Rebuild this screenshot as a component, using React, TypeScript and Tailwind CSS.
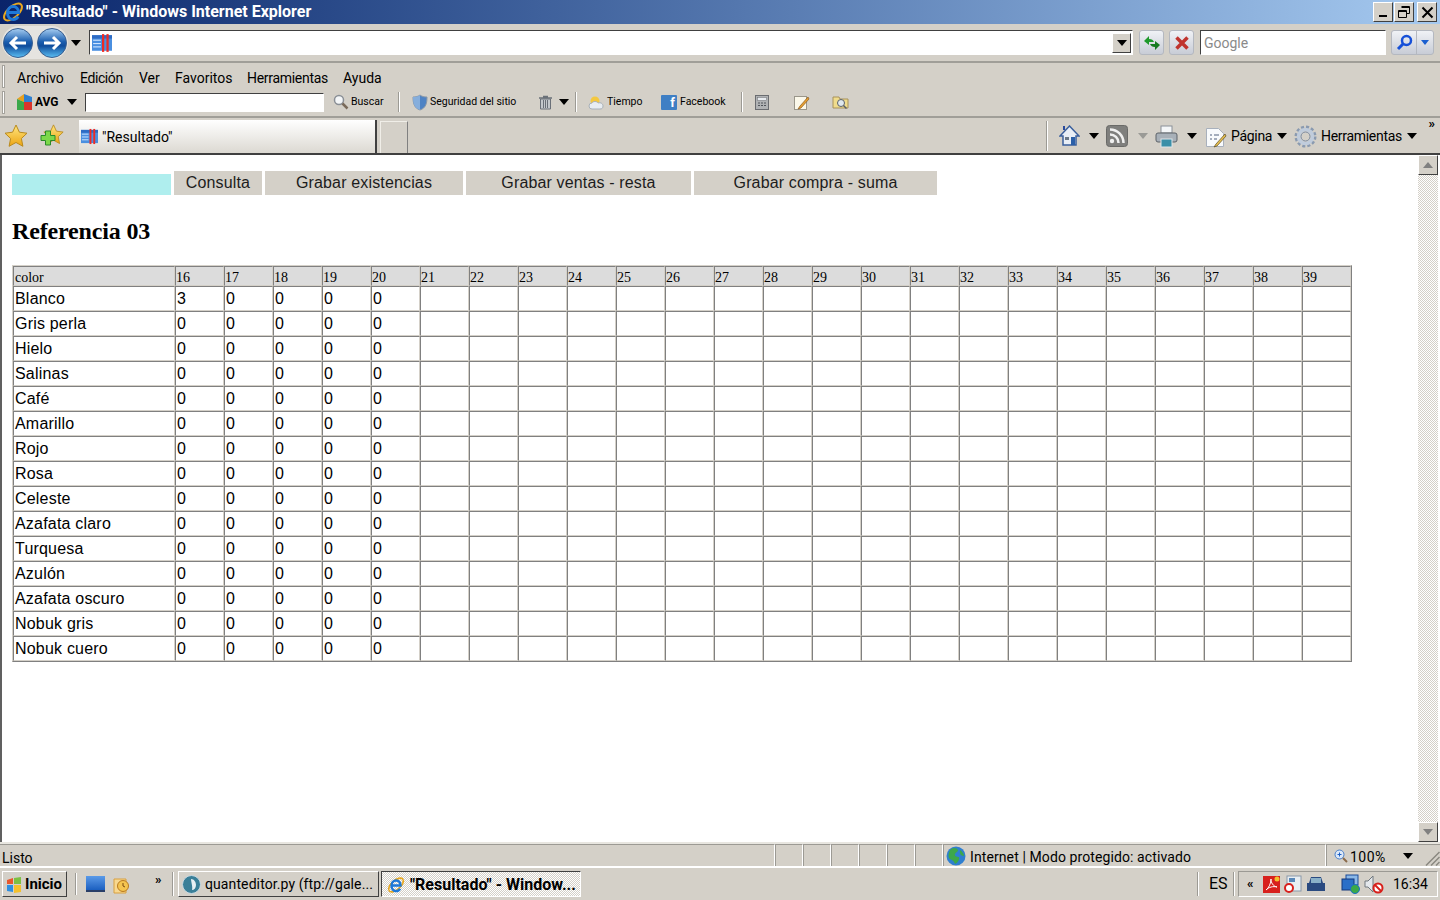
import React from "react";

const sizes = [16, 17, 18, 19, 20, 21, 22, 23, 24, 25, 26, 27, 28, 29, 30, 31, 32, 33, 34, 35, 36, 37, 38, 39];
const colors = [
  "Blanco",
  "Gris perla",
  "Hielo",
  "Salinas",
  "Café",
  "Amarillo",
  "Rojo",
  "Rosa",
  "Celeste",
  "Azafata claro",
  "Turquesa",
  "Azulón",
  "Azafata oscuro",
  "Nobuk gris",
  "Nobuk cuero",
];

const cellBorder = "border border-t-[#808080] border-l-[#808080] border-r-[#d4d0c8] border-b-[#d4d0c8]";

const Arrow = ({ gray = false }: { gray?: boolean }) => (
  <svg width="10" height="6" viewBox="0 0 10 6" className="shrink-0">
    <path d="M0 0h10L5 6z" fill={gray ? "#9a9a96" : "#000"} />
  </svg>
);

const Sep = ({ h = "h-[20px]" }: { h?: string }) => (
  <div className={`w-[2px] shrink-0 border-l border-l-[#9c9a94] border-r border-r-white ${h}`} />
);

const PageIcon = ({ size = 18 }: { size?: number }) => (
  <svg width={size} height={size} viewBox="0 0 18 18" className="shrink-0">
    <rect x="0" y="2" width="18" height="14" fill="#4a8fe0" />
    <rect x="1" y="6" width="7" height="1" fill="#cfe4ff" />
    <rect x="1" y="9" width="7" height="1" fill="#cfe4ff" />
    <rect x="1" y="12" width="7" height="1" fill="#cfe4ff" />
    <rect x="0" y="2" width="18" height="3" fill="#2d6bc4" />
    <rect x="9" y="1" width="2" height="16" fill="#ee2b24" />
    <rect x="13" y="1" width="2" height="16" fill="#ee2b24" />
  </svg>
);

const IELogo = ({ size = 22 }: { size?: number }) => (
  <svg width={size} height={size} viewBox="0 0 22 22" className="shrink-0">
    <ellipse cx="11" cy="11" rx="11" ry="5.5" transform="rotate(-42 11 11)" fill="none" stroke="#e8a820" strokeWidth="2" />
    <path d="M6 11.500h10.500c0-3.500-2.300-6-5.300-6S5.500 8 5.500 12s2.500 6.500 5.700 6.500c2.200 0 3.800-1 4.800-3" fill="none" stroke="#1e78d8" strokeWidth="3" />
  </svg>
);

const NavCircle = ({ dir, id }: { dir: "l" | "r"; id: string }) => (
  <svg width="30" height="30" viewBox="0 0 30 30" className="shrink-0">
    <defs>
      <linearGradient id={id} x1="0" y1="0" x2="0" y2="1">
        <stop offset="0" stopColor="#a8cff2" />
        <stop offset="0.45" stopColor="#1c5fb0" />
        <stop offset="0.6" stopColor="#0f4c9c" />
        <stop offset="1" stopColor="#5cc0f4" />
      </linearGradient>
    </defs>
    <circle cx="15" cy="15" r="14.500" fill={`url(#${id})`} stroke="#3a5f90" />
    <path
      d={dir === "l" ? "M23 15H9M14 9l-6 6 6 6" : "M7 15h14M16 9l6 6-6 6"}
      fill="none"
      stroke="#fff"
      strokeWidth="3"
    />
  </svg>
);

const Star = ({ size = 24 }: { size?: number }) => (
  <svg width={size} height={size} viewBox="0 0 24 24" className="shrink-0">
    <defs>
      <linearGradient id={`star${size}`} x1="0" y1="0" x2="0" y2="1">
        <stop offset="0" stopColor="#ffe680" />
        <stop offset="1" stopColor="#eda512" />
      </linearGradient>
    </defs>
    <path d="M12 1l3.400 7.200 7.600 1-5.600 5.300 1.500 7.800L12 18.500l-6.900 3.800 1.500-7.800L1 9.200l7.600-1z" fill={`url(#star${size})`} stroke="#b98a1e" />
  </svg>
);

const Gear = () => (
  <svg width="23" height="23" viewBox="0 0 23 23" className="shrink-0">
    <circle cx="11.500" cy="11.500" r="9.500" fill="none" stroke="#8a9ab0" strokeWidth="3" strokeDasharray="3 2" />
    <circle cx="11.500" cy="11.500" r="7" fill="none" stroke="#c0ccdc" strokeWidth="3.500" />
    <circle cx="11.500" cy="11.500" r="4.500" fill="none" stroke="#7d8ca2" />
  </svg>
);

const Globe = () => (
  <svg width="20" height="20" viewBox="0 0 20 20" className="shrink-0">
    <circle cx="10" cy="10" r="9.500" fill="#2f7fd0" />
    <path d="M5 3c3-2 6-1 7 1 0 2-2 2-3 4s2 3 4 3c1 3-2 6-4 7-1-3-3-4-5-5S2 6 5 3z" fill="#3da84a" />
    <path d="M14 4c2 1 4 4 4 6-2 0-4-1-4-3z" fill="#3da84a" />
  </svg>
);

const Shield = () => (
  <svg width="16" height="17" viewBox="0 0 16 17" className="shrink-0">
    <path d="M8 1c2 1.500 4 2 7 2 0 6-1 11-7 13C2 14 1 9 1 3c3 0 5-.5 7-2z" fill="#4f83c4" stroke="#8a98a8" />
    <path d="M8 1v15C2 14 1 9 1 3c3 0 5-.5 7-2z" fill="#86aedc" />
  </svg>
);

const ToolButton = ({ children }: { children: React.ReactNode }) => (
  <div className="flex items-center justify-center w-[25px] h-[25px] rounded-[3px] border border-[#b4b8c0] bg-gradient-to-b from-[#f0f2f6] to-[#c8ccd6]">
    {children}
  </div>
);

const Grip = () => <div className="w-[3px] h-[23px] shrink-0 border border-[#a4a29c] bg-white" />;

const Inset = "border border-t-[#404040] border-l-[#404040] border-r-white border-b-white";
const Outset = "border border-t-white border-l-white border-r-[#404040] border-b-[#404040]";

export default function App() {
  return (
    <div className="w-[1440px] h-[900px] overflow-hidden flex flex-col bg-[#d4d0c8] text-black font-['Roboto','Noto_Sans',sans-serif]">
      {/* title bar */}
      <div className="h-[24px] shrink-0 flex items-center pl-[2px] pr-[3px] bg-gradient-to-r from-[#0a246a] to-[#a6caf0]">
        <IELogo />
        <span className="ml-[2px] text-[16px] font-bold text-white whitespace-nowrap">"Resultado" - Windows Internet Explorer</span>
        <div className="ml-auto flex gap-[1px]">
          <div className={`w-[20px] h-[20px] bg-[#d4d0c8] flex items-end justify-center pb-[4px] ${Outset}`}>
            <div className="w-[8px] h-[2px] bg-black" />
          </div>
          <div className={`w-[20px] h-[20px] bg-[#d4d0c8] flex items-center justify-center ${Outset}`}>
            <svg width="14" height="14" viewBox="0 0 14 14">
              <path d="M4.500 1.500h8v7h-3M4.500 2.500h8M1.500 5.500h8v7h-8zM1.500 6.500h8" fill="none" stroke="#000" />
            </svg>
          </div>
          <div className={`ml-[2px] w-[20px] h-[20px] bg-[#d4d0c8] flex items-center justify-center ${Outset}`}>
            <svg width="13" height="13" viewBox="0 0 13 13">
              <path d="M1.500 1.500l10 10M11.500 1.500l-10 10" fill="none" stroke="#000" strokeWidth="2" />
            </svg>
          </div>
        </div>
      </div>

      {/* address bar */}
      <div className="h-[39px] shrink-0 flex items-center pl-[2px] border-b-2 border-b-[#a09e98]">
        <div className="flex items-center justify-between w-[66px] h-[33px] px-[1px] rounded-full bg-[#e6e4e0]">
          <NavCircle dir="l" id="navL" />
          <NavCircle dir="r" id="navR" />
        </div>
        <div className="ml-[3px]">
          <Arrow />
        </div>
        <div className={`ml-[8px] w-[1044px] h-[25px] bg-white flex items-center pl-[2px] pr-[1px] ${Inset}`}>
          <PageIcon size={20} />
          <div className={`ml-auto w-[19px] h-[20px] bg-[#d4d0c8] flex items-center justify-center ${Outset}`}>
            <Arrow />
          </div>
        </div>
        <div className="ml-[6px] flex gap-[5px]">
          <ToolButton>
            <svg width="18" height="16" viewBox="0 0 18 16">
              <path d="M1 6l5-5v3c3 0 4 1 5 3H6v3z" fill="#1f9a2c" />
              <path d="M17 10l-5 5v-3c-3 0-4-1-5-3h5V6z" fill="#167a20" />
            </svg>
          </ToolButton>
          <ToolButton>
            <svg width="16" height="16" viewBox="0 0 16 16">
              <path d="M2.500 2.500l11 11M13.500 2.500l-11 11" stroke="#c0342e" strokeWidth="3.500" fill="none" />
            </svg>
          </ToolButton>
        </div>
        <div className={`ml-[6px] w-[186px] h-[25px] bg-white flex items-center pl-[3px] pt-[2px] text-[14px] text-[#8a8a8a] ${Inset}`}>Google</div>
        <div className="ml-[5px] flex h-[25px] w-[43px] rounded-[3px] border border-[#b4b8c0] bg-gradient-to-b from-[#f0f2f6] to-[#c8ccd6]">
          <div className="w-[25px] flex items-center justify-center border-r border-r-[#b4b8c0]">
            <svg width="17" height="17" viewBox="0 0 17 17">
              <circle cx="10.500" cy="6.500" r="4.500" fill="none" stroke="#1650d8" strokeWidth="2.500" />
              <path d="M7 10l-5 5" stroke="#1650d8" strokeWidth="3" />
            </svg>
          </div>
          <div className="flex-1 flex items-center justify-center">
            <svg width="8" height="5" viewBox="0 0 8 5">
              <path d="M0 0h8L4 5z" fill="#1a5fd0" />
            </svg>
          </div>
        </div>
      </div>

      {/* menu row */}
      <div className="h-[27px] shrink-0 flex items-center pl-[2px] text-[14px]">
        <Grip />
        <div className="ml-[12px] pt-[3px] flex items-center whitespace-nowrap">
          <span className="w-[63px]">Archivo</span>
          <span className="w-[59px] tracking-[-0.4px]">Edición</span>
          <span className="w-[36px]">Ver</span>
          <span className="w-[72px]">Favoritos</span>
          <span className="w-[96px] tracking-[-0.3px]">Herramientas</span>
          <span>Ayuda</span>
        </div>
      </div>

      {/* AVG row */}
      <div className="h-[26px] shrink-0 flex items-center pl-[2px] pb-[2px] text-[10.5px] whitespace-nowrap">
        <Grip />
        <svg width="17" height="18" viewBox="0 0 17 18" className="ml-[11px] shrink-0">
          <path d="M1 6l7-5v8z" fill="#e8a020" />
          <path d="M8 1l8 3v5H8z" fill="#2f7fd0" />
          <path d="M1 6l7 3v8H1z" fill="#3aa84a" />
          <path d="M8 9h8v8H8z" fill="#d8342c" />
        </svg>
        <span className="ml-[2px] w-[22px] font-bold text-[12px]">AVG</span>
        <div className="ml-[10px]">
          <Arrow />
        </div>
        <div className={`ml-[8px] w-[239px] h-[19px] bg-white ${Inset}`} />
        <svg width="16" height="16" viewBox="0 0 16 16" className="ml-[9px] shrink-0">
          <circle cx="6" cy="6" r="4.500" fill="#f4f6f8" stroke="#8a8f96" strokeWidth="1.500" />
          <path d="M9.500 9.500l5 5" stroke="#7a6a5a" strokeWidth="2.500" />
        </svg>
        <span className="ml-[2px] w-[33px]">Buscar</span>
        <div className="ml-[14px]">
          <Sep />
        </div>
        <div className="ml-[12px]">
          <Shield />
        </div>
        <span className="ml-[2px] w-[88px]">Seguridad del sitio</span>
        <svg width="15" height="15" viewBox="0 0 15 15" className="ml-[20px] shrink-0">
          <path d="M1 3h13M5 1.500h5" stroke="#6a7078" strokeWidth="1.500" />
          <path d="M2.500 4h10v10h-10z" fill="#c4c8cc" stroke="#6a7078" />
          <path d="M5.500 5v8M7.500 5v8M9.500 5v8" stroke="#6a7078" />
        </svg>
        <div className="ml-[6px]">
          <Arrow />
        </div>
        <div className="ml-[6px]">
          <Sep />
        </div>
        <svg width="18" height="15" viewBox="0 0 18 15" className="ml-[11px] shrink-0">
          <circle cx="7" cy="6" r="4.500" fill="#f4c840" />
          <path d="M4 14a3 3 0 010-6c1-2 5-2 6 0 3-1 5 1 5 3s-1 3-3 3z" fill="#e8edf2" stroke="#a8b0b8" />
        </svg>
        <span className="ml-[1px] w-[35px]">Tiempo</span>
        <div className="ml-[19px] w-[16px] h-[15px] shrink-0 rounded-[1px] bg-[#3f7fc4] flex items-end justify-end pr-[2px] text-white font-bold text-[13px] leading-[15px]">f</div>
        <span className="ml-[3px] w-[47px]">Facebook</span>
        <div className="ml-[14px]">
          <Sep />
        </div>
        <svg width="14" height="15" viewBox="0 0 14 15" className="ml-[12px] shrink-0">
          <rect x="0.500" y="0.500" width="13" height="14" fill="#b0b2b4" stroke="#6a6c70" />
          <rect x="2.500" y="2.500" width="9" height="3" fill="#e8ecf0" stroke="#6a6c70" strokeWidth="0.500" />
          <path d="M3 8h2M6 8h2M9 8h2M3 10.500h2M6 10.500h2M9 10.500h2" stroke="#50545a" />
        </svg>
        <svg width="17" height="17" viewBox="0 0 17 17" className="ml-[24px] shrink-0">
          <rect x="1.500" y="2.500" width="12" height="13" fill="#fbf8ea" stroke="#9a968a" />
          <path d="M15 3L7 12l-2 3 3-1 8-9z" fill="#e8a030" stroke="#8a5a20" strokeWidth="0.700" />
        </svg>
        <svg width="17" height="15" viewBox="0 0 17 15" className="ml-[22px] shrink-0">
          <path d="M1 2h6l1 2h8v9H1z" fill="#f0dc8c" stroke="#a8925a" />
          <circle cx="9" cy="8" r="3.500" fill="#dfe8ee" stroke="#5a6068" />
          <path d="M11.500 10.500l3 3" stroke="#5a6068" strokeWidth="1.500" />
        </svg>
      </div>

      {/* tab row */}
      <div className="h-[39px] shrink-0 flex items-end border-t-2 border-t-[#a09e98] border-b-2 border-b-[#404040] pl-[4px] relative">
        <div className="self-center">
          <Star />
        </div>
        <div className="self-center relative ml-[12px] w-[24px] h-[24px]">
          <div className="ml-[3px]">
            <Star size={21} />
          </div>
          <svg width="16" height="16" viewBox="0 0 16 16" className="absolute left-0 top-[6px]">
            <path d="M5.500 1h5v4.500H15v5h-4.500V15h-5v-4.500H1v-5h4.500z" fill="#7cd84a" stroke="#2a8a2a" />
          </svg>
        </div>
        <div className="ml-[15px] w-[298px] h-[33px] flex items-center pl-[2px] bg-gradient-to-b from-white to-[#dcd9d2] border-r-2 border-r-[#404040] text-[14px]">
          <PageIcon size={17} />
          <span className="ml-[4px] pt-[2px]">"Resultado"</span>
        </div>
        <div className="ml-[3px] w-[28px] h-[32px] border border-[#f0eee8] border-b-0 border-r-[#808080]" />
        <div className="ml-[638px] self-center">
          <Sep h="h-[30px]" />
        </div>
        <div className="self-center mt-[1px] flex items-center ml-[11px] text-[14px] whitespace-nowrap">
          <svg width="21" height="22" viewBox="0 0 21 22" className="shrink-0">
            <path d="M10.500 1L1 11h3v9h13v-9h3z" fill="#e8eef6" stroke="#3a5f9c" strokeWidth="1.500" />
            <rect x="12" y="12" width="4" height="8" fill="#2a5fa8" />
            <rect x="6" y="12" width="4" height="3" fill="#6a7888" />
            <rect x="4" y="1" width="2" height="4" fill="#2a4a9c" />
          </svg>
          <div className="ml-[9px]">
            <Arrow />
          </div>
          <svg width="22" height="22" viewBox="0 0 22 22" className="ml-[7px] shrink-0">
            <rect x="0.500" y="0.500" width="21" height="21" rx="3" fill="#7f7f7d" stroke="#6a6a68" />
            <circle cx="6" cy="16" r="2.200" fill="#f0f0f0" />
            <path d="M4 9.500a8.500 8.500 0 018.500 8.500M4 4.500A13.500 13.500 0 0117.500 18" fill="none" stroke="#f0f0f0" strokeWidth="2.500" />
          </svg>
          <div className="ml-[10px]">
            <Arrow gray />
          </div>
          <svg width="23" height="23" viewBox="0 0 23 23" className="ml-[7px] shrink-0">
            <rect x="6" y="1" width="11" height="7" fill="#f4f6f8" stroke="#8a9098" />
            <rect x="1" y="8" width="21" height="9" rx="2" fill="#a8b0b8" stroke="#5c6268" />
            <rect x="6" y="14" width="11" height="8" fill="#3a8fa8" stroke="#dfe4e8" />
          </svg>
          <div className="ml-[9px]">
            <Arrow />
          </div>
          <svg width="22" height="23" viewBox="0 0 22 23" className="ml-[8px] shrink-0">
            <path d="M1.500 3.500h12l5 5v13h-17z" fill="#f8fafc" stroke="#a8b0bc" />
            <path d="M5 10h2M9 10h5M5 14h2M9 14h3" stroke="#50607c" />
            <path d="M20 9L11 19l-2 3 3-1 9-10z" fill="#e8c050" stroke="#5a4a20" strokeWidth="0.700" />
          </svg>
          <span className="ml-[4px] w-[40px] tracking-[-0.3px]">Página</span>
          <div className="ml-[6px]">
            <Arrow />
          </div>
          <div className="ml-[7px]">
            <Gear />
          </div>
          <span className="ml-[4px] w-[81px] tracking-[-0.3px]">Herramientas</span>
          <div className="ml-[5px]">
            <Arrow />
          </div>
        </div>
        <span className="absolute right-[5px] top-[-1px] text-[13px] font-bold leading-[14px]">»</span>
      </div>

      {/* page */}
      <div className="flex-1 min-h-0 flex bg-white border-l-2 border-l-[#606060]">
        <div className="flex-1 min-w-0 pl-[10px] pt-[16px] font-['Liberation_Sans',Arial,sans-serif]">
          <div className="flex items-end gap-[3px] text-[16px] tracking-[0.15px] text-[#1c1c1c]">
            <div className="w-[159px] h-[21px] bg-[#afeeee]" />
            <div className="w-[88px] h-[24px] bg-[#d4d0c8] text-center leading-[24px]">Consulta</div>
            <div className="w-[198px] h-[24px] bg-[#d4d0c8] text-center leading-[24px]">Grabar existencias</div>
            <div className="w-[225px] h-[24px] bg-[#d4d0c8] text-center leading-[24px]">Grabar ventas - resta</div>
            <div className="w-[243px] h-[24px] bg-[#d4d0c8] text-center leading-[24px]">Grabar compra - suma</div>
          </div>
          <h1 className="mt-[22px] h-[28px] leading-[28px] font-['Liberation_Serif','Times_New_Roman',serif] font-bold text-[24px] tracking-[-0.15px]">Referencia 03</h1>
          <table className="mt-[20px] w-[1340px] table-fixed border-separate border-spacing-0 border border-t-[#d4d0c8] border-l-[#d4d0c8] border-r-[#808080] border-b-[#808080]">
            <thead>
              <tr className="h-[20px] bg-[#dcdcdc] font-['Liberation_Serif','Times_New_Roman',serif] text-[14px] font-normal">
                <th className={`w-[162px] p-0 pl-[1px] pt-[3px] leading-[15px] text-left font-normal ${cellBorder}`}>color</th>
                {sizes.map((s) => (
                  <th key={s} className={`w-[49px] p-0 pt-[3px] leading-[15px] text-left font-normal ${cellBorder}`}>
                    {s}
                  </th>
                ))}
              </tr>
            </thead>
            <tbody>
              {colors.map((c, i) => (
                <tr key={c} className="h-[25px] text-[16px]">
                  <td className={`p-0 pl-[1px] leading-[18px] tracking-[0.2px] ${cellBorder}`}>{c}</td>
                  {sizes.map((s, j) => (
                    <td key={s} className={`p-0 pl-[1px] leading-[18px] ${cellBorder}`}>
                      {j < 5 ? (i === 0 && j === 0 ? 3 : 0) : ""}
                    </td>
                  ))}
                </tr>
              ))}
            </tbody>
          </table>
        </div>
        {/* scrollbar */}
        <div className="w-[20px] mr-[2px] shrink-0 flex flex-col bg-[repeating-conic-gradient(#d4d0c8_0%_25%,#ffffff_0%_50%)] bg-[length:2px_2px]">
          <div className={`h-[20px] bg-[#d4d0c8] flex items-center justify-center ${Outset}`}>
            <svg width="10" height="6" viewBox="0 0 10 6">
              <path d="M0 6h10L5 0z" fill="#808080" />
            </svg>
          </div>
          <div className={`mt-auto h-[20px] bg-[#d4d0c8] flex items-center justify-center ${Outset}`}>
            <svg width="10" height="6" viewBox="0 0 10 6">
              <path d="M0 0h10L5 6z" fill="#808080" />
            </svg>
          </div>
        </div>
      </div>

      {/* status bar */}
      <div className="h-[26px] shrink-0 flex items-stretch border-t-2 border-t-[#e8e6e0] border-b-2 border-b-white text-[14px]">
        <div className="w-[775px] border border-t-[#9c9a94] border-l-0 border-r-white border-b-0 pl-[2px] pt-[2px] leading-[22px]">Listo</div>
        {[0, 1, 2, 3, 4, 5].map((k) => (
          <div key={k} className="w-[28px] border-r border-r-white border-l border-l-[#9c9a94] border-t border-t-[#9c9a94]" />
        ))}
        <div className="w-[383px] flex items-center pl-[2px] border-l border-l-[#9c9a94] border-t border-t-[#9c9a94] border-r border-r-white">
          <Globe />
          <span className="ml-[4px] pt-[3px] tracking-[0.1px] whitespace-nowrap">Internet | Modo protegido: activado</span>
        </div>
        <div className="flex-1 flex items-center pl-[7px] border-l border-l-[#9c9a94] border-t border-t-[#9c9a94]">
          <svg width="14" height="14" viewBox="0 0 14 14" className="shrink-0">
            <circle cx="5.500" cy="5.500" r="4.500" fill="#dbe8f8" stroke="#4a7fc8" />
            <path d="M3.500 5.500h4M5.500 3.500v4" stroke="#1a5fc8" />
            <path d="M9 9l4 4" stroke="#8a6a4a" strokeWidth="2" />
          </svg>
          <span className="ml-[2px] pt-[3px] w-[53px] tracking-[0.5px]">100%</span>
          <Arrow />
          <svg width="16" height="16" viewBox="0 0 16 16" className="ml-auto self-end shrink-0">
            <path d="M15.500 2L2 15.500M15.500 7L7 15.500M15.500 12L12 15.500" stroke="#8a8880" strokeWidth="1.500" />
          </svg>
        </div>
      </div>

      {/* taskbar */}
      <div className="h-[32px] shrink-0 flex items-center pl-[2px] text-[14px] whitespace-nowrap">
        <div className={`w-[65px] h-[26px] flex items-center pl-[2px] pt-[1px] font-bold text-[15px] ${Outset}`}>
          <svg width="18" height="18" viewBox="0 0 18 18" className="shrink-0">
            <path d="M2 4l6-2v6H2z" fill="#e8582c" />
            <path d="M9 2l7-1v7H9z" fill="#7cc042" />
            <path d="M2 9h6v7l-6-1z" fill="#2f8fe0" />
            <path d="M9 9h7v7l-7 1z" fill="#f4c02c" />
          </svg>
          <span className="ml-[2px]">Inicio</span>
        </div>
        <div className="ml-[8px]">
          <Sep h="h-[22px]" />
        </div>
        <div className="ml-[9px] w-[19px] h-[16px] shrink-0 bg-gradient-to-b from-[#5a9ae8] to-[#1a5fc0] border-b-2 border-b-[#2a3f68]" />
        <svg width="20" height="20" viewBox="0 0 20 20" className="ml-[8px] shrink-0">
          <path d="M1 5h12v14H1z" fill="#f8d890" stroke="#d8a040" />
          <circle cx="10" cy="12" r="5.500" fill="#f4c450" stroke="#b87a20" />
          <path d="M10 9v3l2 1" stroke="#7a4a10" fill="none" />
        </svg>
        <span className="ml-[22px] w-[8px] font-bold text-[13px] -mt-[8px]">»</span>
        <div className="ml-[9px]">
          <Sep h="h-[24px]" />
        </div>
        <div className={`ml-[4px] w-[201px] h-[26px] flex items-center pl-[3px] pt-[1px] tracking-[0.1px] ${Outset}`}>
          <svg width="19" height="19" viewBox="0 0 19 19" className="shrink-0">
            <circle cx="9.500" cy="9.500" r="9" fill="#3a7f98" stroke="#c8d8e0" />
            <path d="M9 4c3 0 5 3 5 6s-2 5-4 5c1-3-1-8-1-11z" fill="#e8f0f4" />
          </svg>
          <span className="ml-[4px]">quanteditor.py (ftp://gale...</span>
        </div>
        <div className="ml-[2px] w-[200px] h-[26px] flex items-center pl-[5px] pt-[1px] font-bold border border-t-[#404040] border-l-[#404040] border-r-white border-b-white bg-[repeating-conic-gradient(#d4d0c8_0%_25%,#ffffff_0%_50%)] bg-[length:2px_2px]">
          <IELogo size={18} />
          <span className="ml-[5px] text-[16px]">"Resultado" - Window...</span>
        </div>
        <div className="ml-auto">
          <Sep h="h-[24px]" />
        </div>
        <span className="ml-[10px] w-[20px] text-[16px]">ES</span>
        <div className="ml-[4px]">
          <Sep h="h-[24px]" />
        </div>
        <div className="ml-[3px] mr-[2px] w-[200px] h-[26px] flex items-center pl-[8px] border border-t-[#9c9a94] border-l-[#9c9a94] border-r-white border-b-white">
          <span className="font-bold text-[13px] w-[16px]">«</span>
          <svg width="17" height="17" viewBox="0 0 17 17" className="shrink-0">
            <rect width="17" height="17" fill="#d8201c" />
            <path d="M3 14c3-2 5-7 5-11 0 4 2 7 6 8-4-1-8 0-11 3z" fill="none" stroke="#fff" />
            <circle cx="14" cy="3" r="2.500" fill="#f4c02c" />
          </svg>
          <svg width="18" height="18" viewBox="0 0 18 18" className="ml-[4px] shrink-0">
            <rect x="3" y="1" width="14" height="15" fill="#e8eef2" stroke="#8a98a8" />
            <rect x="5" y="3" width="6" height="4" fill="#5a88b8" />
            <circle cx="5" cy="13" r="4" fill="#fff" stroke="#d8201c" strokeWidth="2" />
          </svg>
          <svg width="20" height="16" viewBox="0 0 20 16" className="ml-[4px] shrink-0">
            <path d="M3 7l2-6h10l2 6h2v8H1V7z" fill="#2a4a80" />
            <rect x="5" y="2" width="10" height="5" fill="#8ab0c8" />
          </svg>
          <svg width="19" height="20" viewBox="0 0 19 20" className="ml-[15px] shrink-0">
            <rect x="5" y="1" width="12" height="10" fill="#8ab8e8" stroke="#1a4a98" />
            <rect x="1" y="5" width="12" height="11" fill="#2a6fc8" stroke="#12387c" />
            <circle cx="14" cy="15" r="4.500" fill="#3aa84a" stroke="#1a6fc8" />
          </svg>
          <svg width="20" height="20" viewBox="0 0 20 20" className="ml-[4px] shrink-0">
            <path d="M1 7h3l5-5v16l-5-5H1z" fill="#e4e8ec" stroke="#70787f" />
            <circle cx="14" cy="14" r="4.500" fill="#fff" stroke="#d8201c" strokeWidth="2" />
            <path d="M11 11l6 6" stroke="#d8201c" strokeWidth="2" />
          </svg>
          <span className="ml-[9px] pt-[1px]">16:34</span>
        </div>
      </div>
    </div>
  );
}
